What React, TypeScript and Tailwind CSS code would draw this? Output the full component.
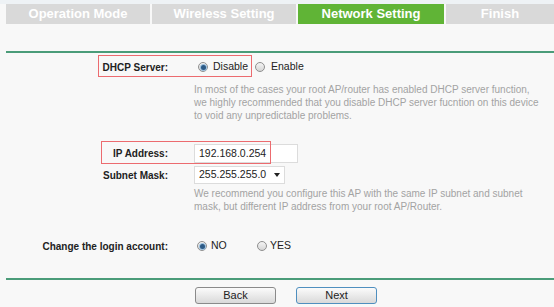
import React from 'react'

const tabs = [
  { label: 'Operation Mode', w: 'w-[144px]', active: false },
  { label: 'Wireless Setting', w: 'w-[144px]', active: false },
  { label: 'Network Setting', w: 'w-[146px]', active: true },
  { label: 'Finish', w: 'flex-1', active: false },
]

function Radio({ checked }: { checked?: boolean }) {
  return (
    <span className="flex h-[10px] w-[10px] shrink-0 items-center justify-center rounded-full border border-[#8f8f8f] bg-[linear-gradient(#f4f4f4,#d6d6d6)]">
      {checked && <span className="h-[5px] w-[5px] rounded-full bg-[#2c5a86] shadow-[0_0_0_1px_#9cc0de]" />}
    </span>
  )
}

function Label({ children }: { children: React.ReactNode }) {
  return <div className="w-[168px] shrink-0 text-right text-[10px] font-bold text-[#222]">{children}</div>
}

export default function App() {
  return (
    <div className="h-[307px] w-full overflow-hidden bg-[#f8f8f8] font-['Liberation_Sans',Arial,sans-serif] text-[#222]">
      <div className="h-[4px] bg-[#eef2f5]" />
      <div className="flex h-[20px] gap-[2px] pl-[6px]">
        {tabs.map((t) => (
          <div
            key={t.label}
            className={`${t.w} flex items-center justify-center text-[13px] font-bold text-white ${
              t.active ? 'bg-[#60b436]' : 'bg-[#d9d9d9]'
            }`}
          >
            {t.label}
          </div>
        ))}
      </div>

      <div className="ml-[6px] mt-[27px] h-[2px] bg-[#4b9c79]" />

      {/* DHCP */}
      <div className="relative mt-[4px] flex h-[20px] items-center">
        <div className="absolute left-[98px] top-[-2px] h-[22px] w-[154px] border border-[#ec6b6f]" />
        <Label>DHCP Server:</Label>
        <div className="ml-[30px] flex items-center text-[10.5px]">
          <Radio checked />
          <span className="ml-[5px]">Disable</span>
          <span className="ml-[7px]">
            <Radio />
          </span>
          <span className="ml-[6px]">Enable</span>
        </div>
      </div>
      <div className="ml-[194px] mt-[6px] text-[10px] leading-[13px] text-[#a3a3a3]">
        <div>In most of the cases your root AP/router has enabled DHCP server function,</div>
        <div>we highly recommended that you disable DHCP server fucntion on this device</div>
        <div>to void any unpredictable problems.</div>
      </div>

      {/* IP */}
      <div className="relative mt-[22px] flex h-[19px] items-center">
        <div className="absolute left-[101px] top-[-3px] h-[23px] w-[170px] border border-[#ec6b6f]" />
        <Label>IP Address:</Label>
        <div className="ml-[26px] flex h-[19px] w-[104px] items-center border border-[#dcdcdc] bg-white pl-[4px] text-[10.5px]">
          192.168.0.254
        </div>
      </div>
      <div className="mt-[3px] flex h-[18px] items-center">
        <Label>Subnet Mask:</Label>
        <div className="ml-[26px] flex h-[18px] w-[91px] items-center justify-between border border-[#dcdcdc] bg-white pl-[4px] pr-[4px] text-[10.5px]">
          <span>255.255.255.0</span>
          <span className="h-0 w-0 border-x-[3px] border-t-[4px] border-x-transparent border-t-[#222]" />
        </div>
      </div>
      <div className="ml-[194px] mt-[3px] text-[10px] leading-[13px] text-[#a3a3a3]">
        <div>We recommend you configure this AP with the same IP subnet and subnet</div>
        <div>mask, but different IP address from your root AP/Router.</div>
      </div>

      {/* login */}
      <div className="mt-[24px] flex h-[18px] items-center">
        <Label>Change the login account:</Label>
        <div className="ml-[29px] flex items-center text-[10.5px]">
          <Radio checked />
          <span className="ml-[4px] w-[46px]">NO</span>
          <Radio />
          <span className="ml-[3px]">YES</span>
        </div>
      </div>

      <div className="ml-[6px] mt-[23px] h-[2px] bg-[#4b9c79]" />

      <div className="ml-[195px] mt-[7px] flex gap-[20px]">
        <button className="h-[17px] w-[81px] rounded-[3px] border border-[#8a8a8a] bg-[linear-gradient(#fbfbfb,#d9d9d9)] text-[11px] leading-none text-[#222]">
          Back
        </button>
        <button className="h-[17px] w-[81px] rounded-[3px] border border-[#4f8fbf] bg-[linear-gradient(#fbfbfb,#d9d9d9)] text-[11px] leading-none text-[#222]">
          Next
        </button>
      </div>
    </div>
  )
}
